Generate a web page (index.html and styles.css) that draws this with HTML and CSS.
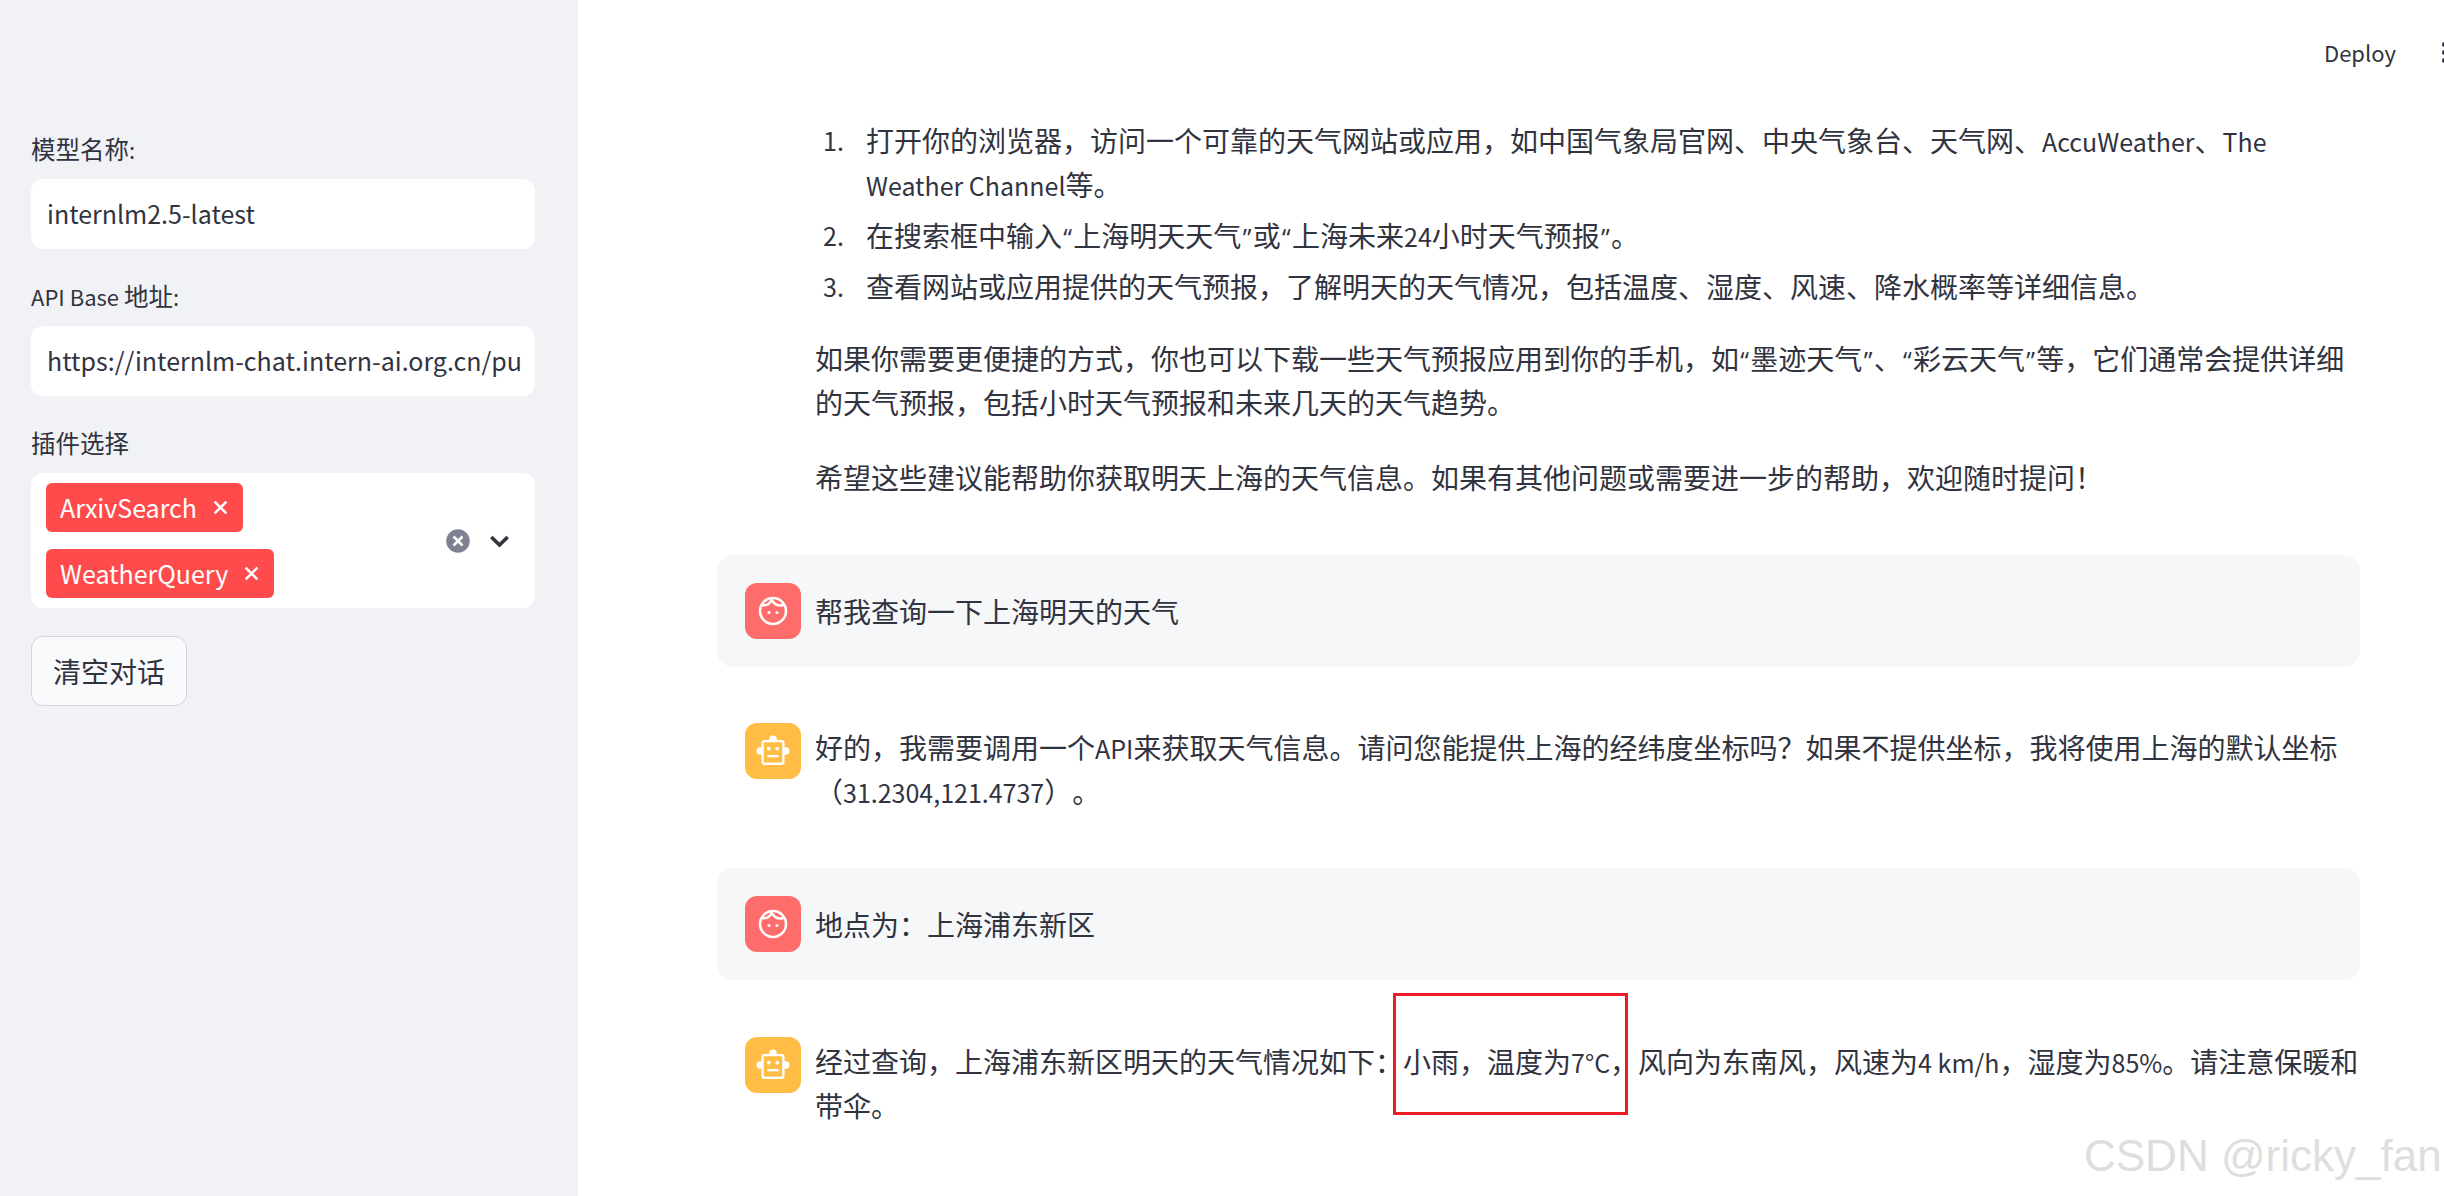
FILE: index.html
```html
<!DOCTYPE html>
<html lang="zh-CN">
<head>
  <meta charset="UTF-8">
  <title>InternLM Chat</title>
  <link rel="stylesheet" href="styles.css">
</head>
<body>
  <aside class="sidebar">
    <label class="field-label">模型名称<span class="lat">:</span></label>
    <div class="text-input">internlm2.5-latest</div>

    <label class="field-label"><span class="lat">API Base </span>地址<span class="lat">:</span></label>
    <div class="text-input clipped">https://internlm-chat.intern-ai.org.cn/pu</div>

    <label class="field-label">插件选择</label>
    <div class="multi-select">
      <div class="tags">
        <span class="tag">ArxivSearch <svg class="tag-x" viewBox="0 0 14 14"><path d="M1.5 1.5l11 11M12.5 1.5l-11 11"/></svg></span>
        <span class="tag">WeatherQuery <svg class="tag-x" viewBox="0 0 14 14"><path d="M1.5 1.5l11 11M12.5 1.5l-11 11"/></svg></span>
      </div>
      <svg class="clear-all" viewBox="0 0 26 26"><circle cx="13" cy="13" r="13"/><path d="M8.5 8.5l9 9M17.5 8.5l-9 9"/></svg>
      <svg class="chevron" viewBox="0 0 18 12"><path d="M2 2.5l7 7 7-7"/></svg>
    </div>

    <button class="clear-btn">清空对话</button>
  </aside>

  <main class="main">
    <header class="topbar">
      <span class="deploy">Deploy</span>
      <span class="more"><i></i><i></i><i></i></span>
    </header>

    <div class="content">
      <div class="answer">
        <ol class="steps">
          <li>打开你的浏览器，访问一个可靠的天气网站或应用，如中国气象局官网、中央气象台、天气网、<span class="lat">AccuWeather</span>、<span class="lat">The Weather Channel</span>等。</li>
          <li>在搜索框中输入<span class="q">“</span>上海明天天气<span class="q">”</span>或<span class="q">“</span>上海未来<span class="lat">24</span>小时天气预报<span class="q">”</span>。</li>
          <li>查看网站或应用提供的天气预报，了解明天的天气情况，包括温度、湿度、风速、降水概率等详细信息。</li>
        </ol>
        <p>如果你需要更便捷的方式，你也可以下载一些天气预报应用到你的手机，如<span class="q">“</span>墨迹天气<span class="q">”</span>、<span class="q">“</span>彩云天气<span class="q">”</span>等，它们通常会提供详细的天气预报，包括小时天气预报和未来几天的天气趋势。</p>
        <p class="closing">希望这些建议能帮助你获取明天上海的天气信息。如果有其他问题或需要进一步的帮助，欢迎随时提问！</p>
      </div>

      <div class="msg user">
        <div class="avatar face">
          <svg viewBox="0 0 32 32"><circle cx="16" cy="16" r="13"/><path d="M5.5 10c4 1 7-1 9-5 2.5 4 6.5 6.5 12 5"/><circle class="eye" cx="12" cy="17.5" r="1.5"/><circle class="eye" cx="20" cy="17.5" r="1.5"/></svg>
        </div>
        <div class="msg-text">帮我查询一下上海明天的天气</div>
      </div>

      <div class="msg bot">
        <div class="avatar robot">
          <svg viewBox="0 0 36 36"><circle class="fill" cx="18" cy="5.5" r="4"/><circle class="fill" cx="4.5" cy="18" r="4"/><circle class="fill" cx="31.5" cy="18" r="4"/><rect x="7" y="7.5" width="22" height="24" rx="2"/><circle class="eye" cx="13.5" cy="15.5" r="2"/><circle class="eye" cx="22.5" cy="15.5" r="2"/><path d="M12 23.5h12"/></svg>
        </div>
        <div class="msg-text">好的，我需要调用一个<span class="lat">API</span>来获取天气信息。请问您能提供上海的经纬度坐标吗？如果不提供坐标，我将使用上海的默认坐标（<span class="lat">31.2304,121.4737</span>）。</div>
      </div>

      <div class="msg user">
        <div class="avatar face">
          <svg viewBox="0 0 32 32"><circle cx="16" cy="16" r="13"/><path d="M5.5 10c4 1 7-1 9-5 2.5 4 6.5 6.5 12 5"/><circle class="eye" cx="12" cy="17.5" r="1.5"/><circle class="eye" cx="20" cy="17.5" r="1.5"/></svg>
        </div>
        <div class="msg-text">地点为：上海浦东新区</div>
      </div>

      <div class="msg bot">
        <div class="avatar robot">
          <svg viewBox="0 0 36 36"><circle class="fill" cx="18" cy="5.5" r="4"/><circle class="fill" cx="4.5" cy="18" r="4"/><circle class="fill" cx="31.5" cy="18" r="4"/><rect x="7" y="7.5" width="22" height="24" rx="2"/><circle class="eye" cx="13.5" cy="15.5" r="2"/><circle class="eye" cx="22.5" cy="15.5" r="2"/><path d="M12 23.5h12"/></svg>
        </div>
        <div class="msg-text">经过查询，上海浦东新区明天的天气情况如下：小雨，温度为<span class="lat">7°C</span>，风向为东南风，风速为<span class="lat">4 km/h</span>，湿度为<span class="lat">85%</span>。请注意保暖和带伞。</div>
      </div>
    </div>
  </main>

  <div class="red-box"></div>
  <div class="watermark">CSDN @ricky_fan</div>
</body>
</html>
```

FILE: styles.css
```css
* {
  box-sizing: border-box;
}
html, body {
  margin: 0;
  height: 100%;
}
body {
  display: flex;
  height: 1196px;
  overflow: hidden;
  background: #fff;
  color: #31333f;
  font-family: "Noto Sans CJK SC", "Noto Sans", sans-serif;
  font-size: 28px;
  text-spacing-trim: space-all;
}
/* latin runs sit a bit smaller than the cjk around them */
.lat {
  font-size: 25px;
  line-height: 1;
}
/* narrow curly quotes */
.q {
  margin: 0 1.3px;
  font-family: "Open Sans", sans-serif;
  font-size: 25px;
  line-height: 1;
}

/* sidebar */
.sidebar {
  width: 578px;
  flex-shrink: 0;
  background: #f0f2f6;
  padding: 131px 43px 0 31px;
}
.field-label {
  display: block;
  font-size: 24.5px;
  line-height: 36px;
  margin-bottom: 12px;
}
.field-label .lat {
  font-size: 22px;
}
.text-input {
  height: 70px;
  line-height: 68px;
  background: #fff;
  border-radius: 12px;
  padding: 0 16px;
  margin-bottom: 29px;
  font-size: 25px;
  white-space: nowrap;
  overflow: hidden;
}
.multi-select {
  display: flex;
  align-items: center;
  height: 135px;
  background: #fff;
  border-radius: 12px;
  padding: 0 13px 0 15px;
}
.tags {
  flex: 1;
  display: flex;
  flex-direction: column;
  align-items: flex-start;
  gap: 17px;
  font-size: 25px;
}
.tag {
  display: flex;
  align-items: center;
  gap: 16px;
  height: 49px;
  padding: 0 15px 2px 14px;
  background: #ff4b4b;
  color: #fff;
  border-radius: 6px;
}
.tag-x {
  width: 15px;
  height: 15px;
  margin-top: 2px;
  fill: none;
  stroke: #fff;
  stroke-width: 2.4;
}
.clear-all {
  width: 26px;
  height: 26px;
  fill: #7f8193;
  stroke: #fff;
  stroke-width: 2.5;
}
.chevron {
  width: 21px;
  height: 14px;
  margin: 0 12px 0 18px;
  fill: none;
  stroke: #31333f;
  stroke-width: 3;
}
.clear-btn {
  display: block;
  width: 156px;
  height: 70px;
  margin-top: 28px;
  background: #f9fafb;
  border: 1px solid #d3d5da;
  border-radius: 12px;
  color: #31333f;
  font: inherit;
}

/* main area */
.main {
  flex: 1;
  min-width: 0;
  overflow: hidden;
}
.topbar {
  display: flex;
  align-items: center;
  height: 106px;
  padding: 0 0 2px 1746px;
}
.deploy {
  font-size: 22px;
}
.more {
  display: flex;
  flex-direction: column;
  gap: 3px;
  margin-left: 46px;
}
.more i {
  width: 5px;
  height: 5px;
  border-radius: 50%;
  background: #31333f;
}
.content {
  padding: 12px 84px 0 139px;
  line-height: 44px;
}
.answer {
  padding-left: 98px;
  margin-bottom: 56px;
}
.answer p {
  margin: 28px 0 0;
}
.answer p.closing {
  margin-top: 31px;
}
.steps {
  list-style: none;
  counter-reset: step;
  margin: 0;
  padding: 0 0 0 51px;
}
.steps li {
  position: relative;
  counter-increment: step;
  margin-bottom: 7px;
}
.steps li::before {
  content: counter(step) ".";
  position: absolute;
  left: -43px;
  font-size: 25px;
}
.msg {
  display: flex;
  gap: 14px;
  padding: 28px;
  margin-bottom: 28px;
  border-radius: 16px;
}
.msg.user {
  background: #f6f7f9;
}
.msg-text {
  flex: 1;
  padding-top: 2px;
}
.msg.user .msg-text {
  padding-top: 6px;
}
.msg.user + .msg.bot + .msg.user + .msg.bot {
  margin-top: 29px;
}
.msg.bot {
  padding: 28px 0 27px 28px;
}
.avatar {
  display: flex;
  align-items: center;
  justify-content: center;
  width: 56px;
  height: 56px;
  flex-shrink: 0;
  border-radius: 12px;
}
.avatar svg {
  fill: none;
  stroke: #fff;
  stroke-width: 2.5;
}
.avatar .eye,
.avatar .fill {
  fill: #fff;
  stroke: none;
}
.face {
  background: #ff6c6c;
}
.face svg {
  width: 32px;
  height: 32px;
}
.robot {
  background: #ffbd45;
}
.robot svg {
  width: 34px;
  height: 34px;
}
.robot rect {
  fill: #ffbd45;
}

/* overlays from the annotated screenshot */
.red-box {
  position: absolute;
  left: 1393px;
  top: 993px;
  width: 235px;
  height: 122px;
  border: 3px solid #ed1c24;
}
.watermark {
  position: absolute;
  left: 2084px;
  top: 1128px;
  font-family: "Liberation Sans", sans-serif;
  font-size: 44px;
  line-height: 56px;
  white-space: nowrap;
  color: #dedede;
}
```
